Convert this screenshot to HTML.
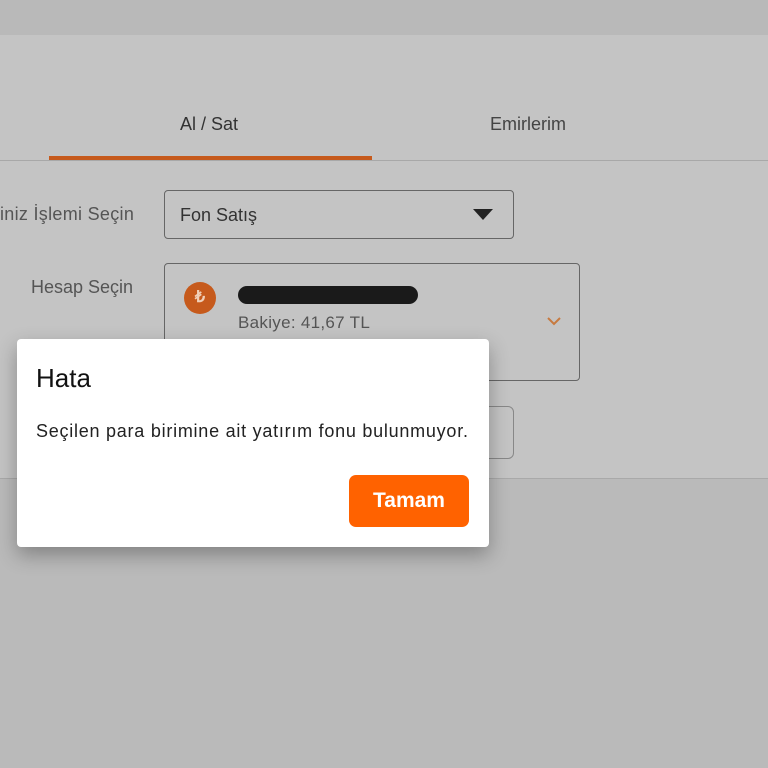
<!DOCTYPE html>
<html><head><meta charset="utf-8"><style>
*{margin:0;padding:0;box-sizing:border-box}
body{width:768px;height:768px;position:relative;overflow:hidden;background:#bababa;font-family:"Liberation Sans",sans-serif;}
.a{position:absolute}
</style></head><body>
<div class="a" style="left:0;top:0;width:768px;height:35px;background:#b9b9b9"></div>
<div class="a" style="left:0;top:35px;width:768px;height:444px;background:#c4c4c4;border-bottom:1px solid #a9a9a9"></div>
<div class="a" style="left:180px;top:114px;font-size:18px;color:#333">Al / Sat</div>
<div class="a" style="left:490px;top:114px;font-size:18px;color:#444">Emirlerim</div>
<div class="a" style="left:0;top:160px;width:768px;height:1px;background:#a8a8a8"></div>
<div class="a" style="left:49px;top:156px;width:323px;height:4px;background:#c65a1c"></div>
<div class="a" style="left:0;top:204px;font-size:18px;color:#555;white-space:nowrap;letter-spacing:0.3px">iniz İşlemi Seçin</div>
<div class="a" style="left:164px;top:190px;width:350px;height:49px;border:1px solid #666;border-radius:4px"></div>
<div class="a" style="left:180px;top:205px;font-size:18px;color:#333">Fon Satış</div>
<div class="a" style="left:473px;top:209px;width:0;height:0;border-left:10px solid transparent;border-right:10px solid transparent;border-top:11px solid #222"></div>
<div class="a" style="left:31px;top:277px;font-size:18px;color:#555">Hesap Seçin</div>
<div class="a" style="left:164px;top:263px;width:416px;height:118px;border:1px solid #666;border-radius:4px"></div>
<div class="a" style="left:184px;top:282px;width:32px;height:32px;border-radius:50%;background:#c65a1c;color:#f0d0b8;font-size:16px;font-weight:bold;text-align:center;line-height:32px">₺</div>
<div class="a" style="left:238px;top:286px;width:180px;height:18px;background:#1a1a1a;border-radius:10px"></div>
<div class="a" style="left:238px;top:313px;font-size:17px;color:#555;letter-spacing:0.3px">Bakiye: 41,67 TL</div>
<svg class="a" style="left:546px;top:316px" width="16" height="10"><path d="M2 2 L8 8 L14 2" stroke="#c77a40" stroke-width="2" fill="none"/></svg>
<div class="a" style="left:400px;top:406px;width:114px;height:53px;border:1px solid #888;border-radius:6px"></div>
<div class="a" style="left:17px;top:339px;width:472px;height:208px;background:#fff;border-radius:4px;box-shadow:0 8px 20px rgba(0,0,0,0.3)"></div>
<div class="a" style="left:36px;top:363px;font-size:26px;color:#111">Hata</div>
<div class="a" style="left:36px;top:421px;font-size:18px;color:#222;white-space:nowrap;letter-spacing:0.75px">Seçilen para birimine ait yatırım fonu bulunmuyor.</div>
<div class="a" style="left:349px;top:475px;width:120px;height:52px;background:#ff6200;border-radius:7px;color:#fff;font-size:21px;font-weight:bold;text-align:center;line-height:52px">Tamam</div>
</body></html>
